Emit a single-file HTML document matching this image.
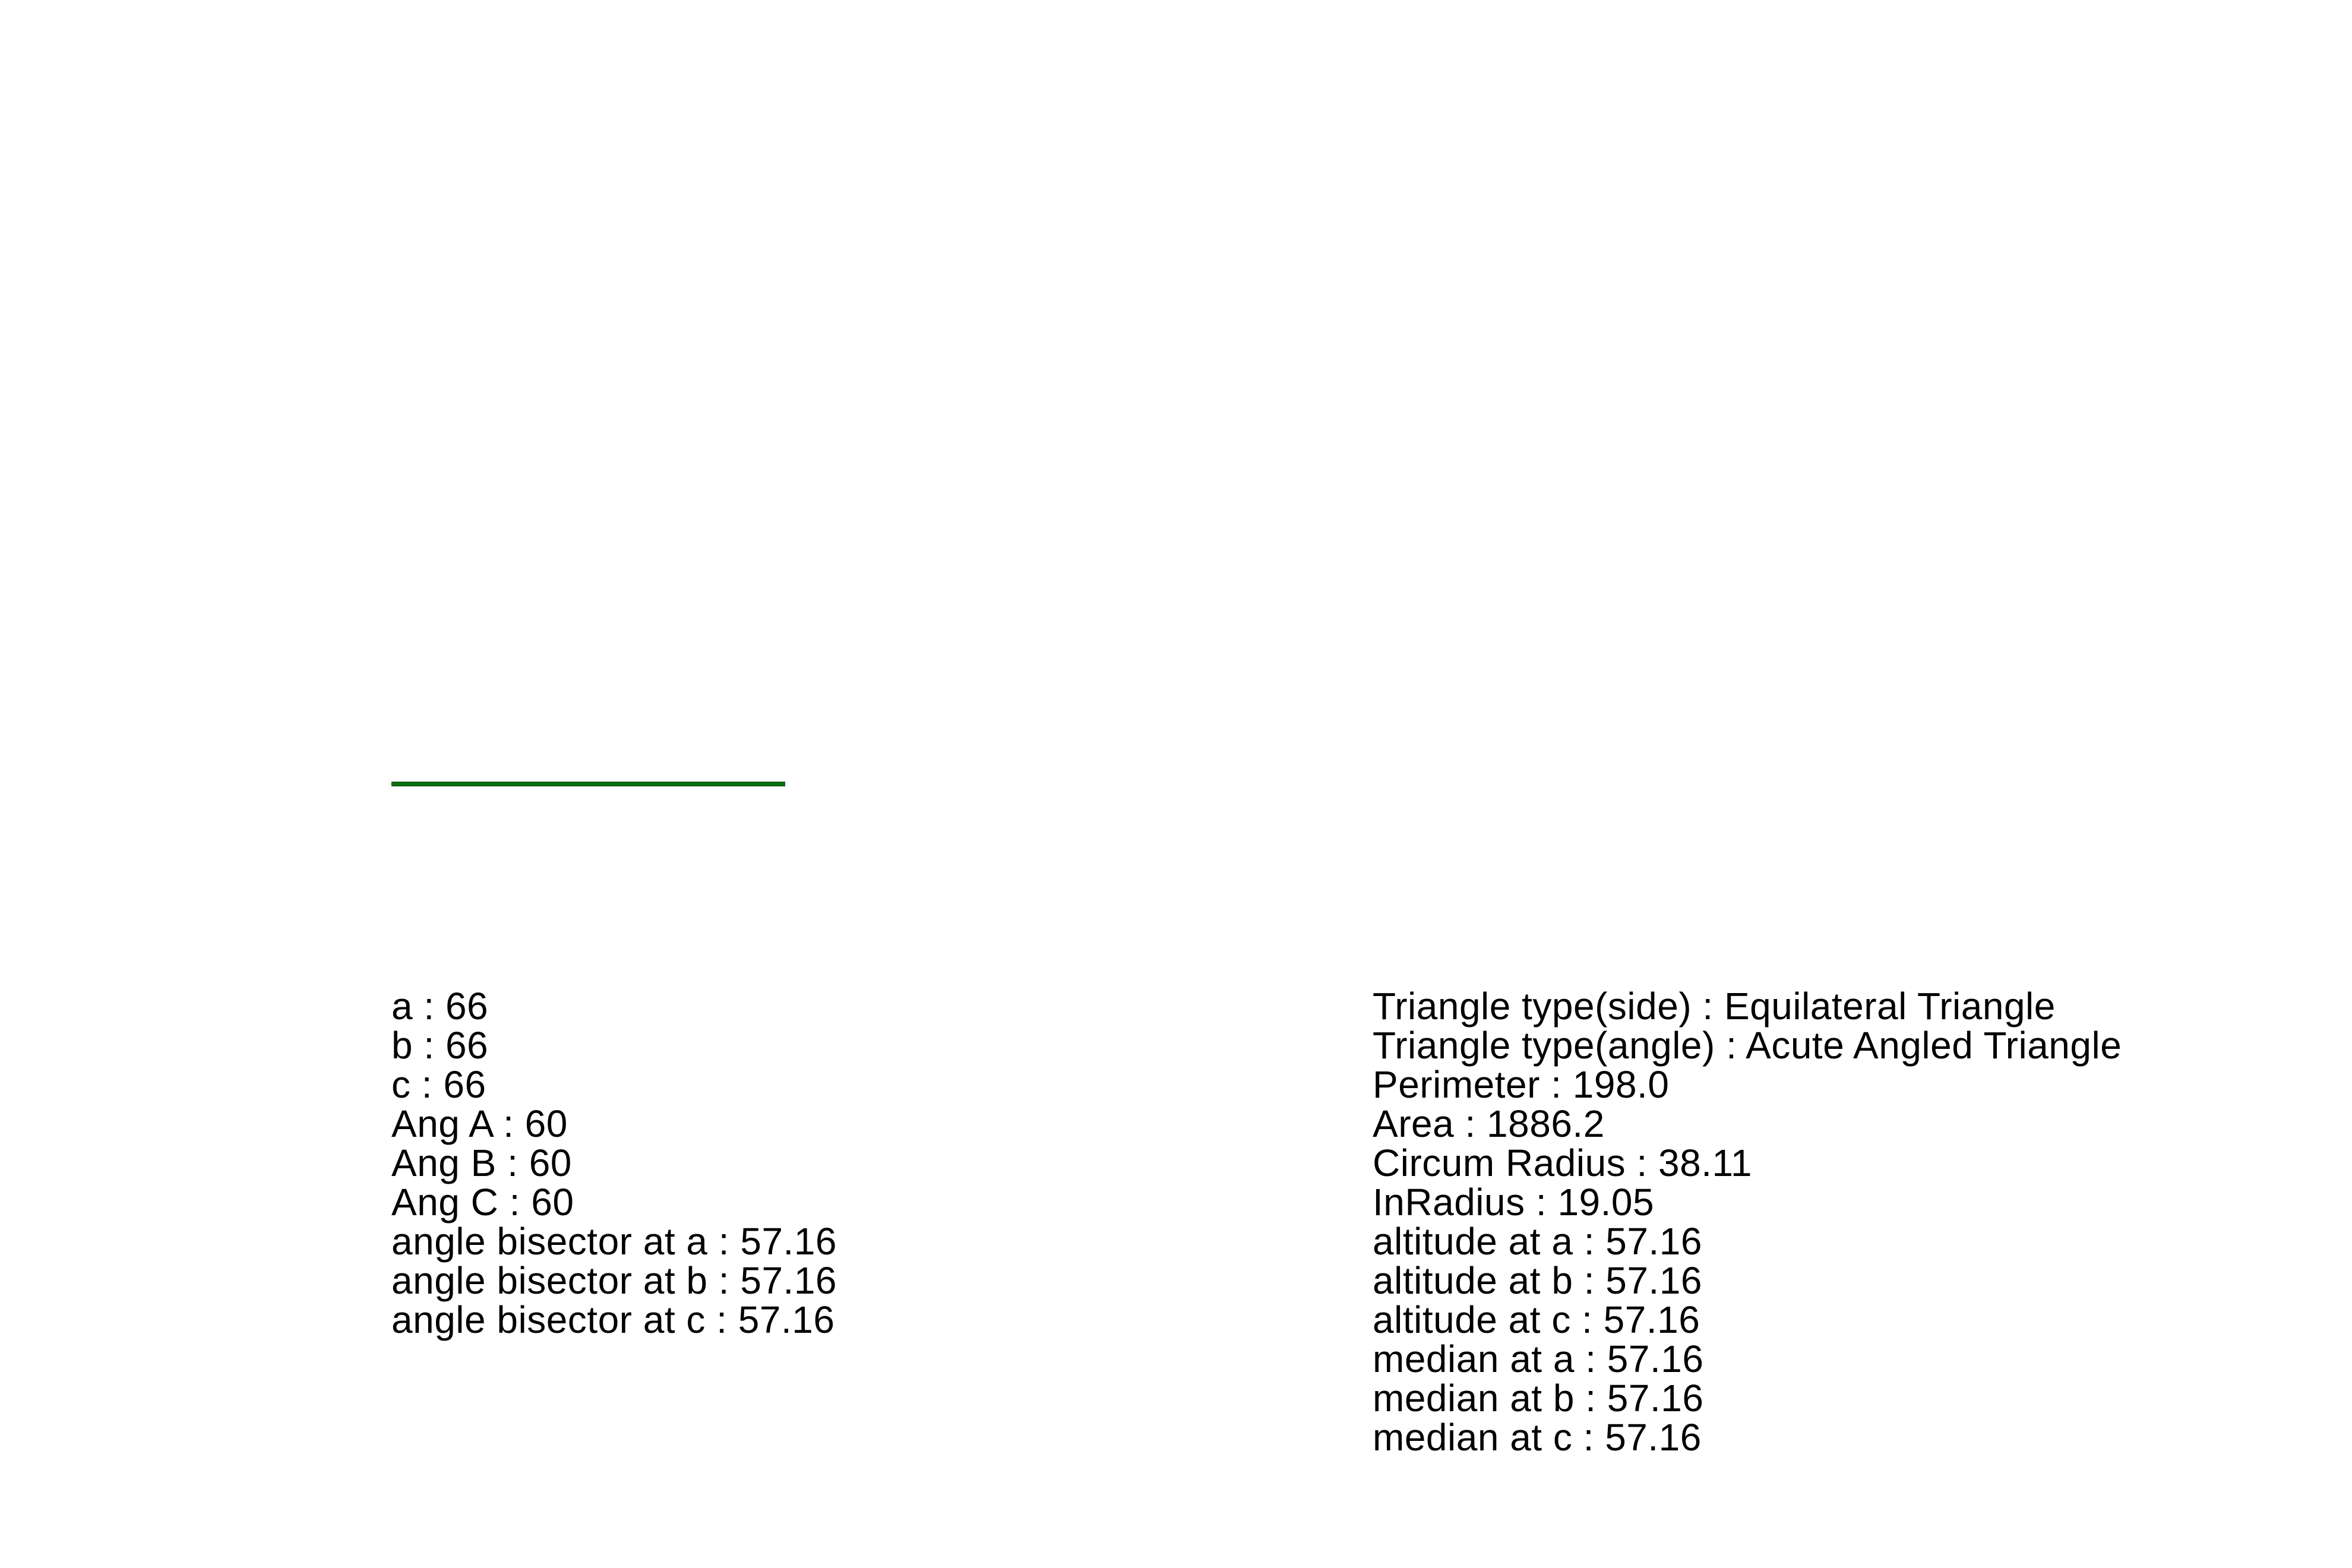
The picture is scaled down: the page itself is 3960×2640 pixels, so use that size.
<!DOCTYPE html>
<html><head><meta charset="utf-8"><style>
html,body{margin:0;padding:0;background:#fff;width:3960px;height:2640px;overflow:hidden}
.line{position:absolute;left:660px;top:1317px;width:661px;height:6px;background:#0e6e0e;box-shadow:0 0 0 1px #0a540a}
.col{position:absolute;top:1661px;font-family:"Liberation Sans",sans-serif;font-size:64px;line-height:66px;color:#000;letter-spacing:0.5px;white-space:nowrap}
</style></head><body>
<div class="line"></div>
<div class="col" style="left:659px">
a : 66<br>b : 66<br>c : 66<br>Ang A : 60<br>Ang B : 60<br>Ang C : 60<br>angle bisector at a : 57.16<br>angle bisector at b : 57.16<br>angle bisector at c : 57.16
</div>
<div class="col" style="left:2311px">
Triangle type(side) : Equilateral Triangle<br>Triangle type(angle) : Acute Angled Triangle<br>Perimeter : 198.0<br>Area : 1886.2<br>Circum Radius : 38.11<br>InRadius : 19.05<br>altitude at a : 57.16<br>altitude at b : 57.16<br>altitude at c : 57.16<br>median at a : 57.16<br>median at b : 57.16<br>median at c : 57.16
</div>
</body></html>
